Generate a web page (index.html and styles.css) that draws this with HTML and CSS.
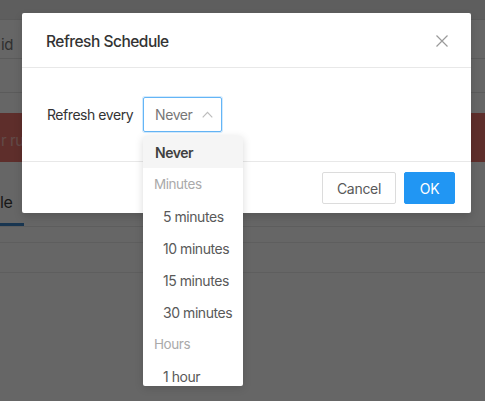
FILE: index.html
```html
<!DOCTYPE html>
<html>
<head>
<meta charset="utf-8">
<link rel="stylesheet" href="styles.css">
</head>
<body>
<div class="page">
  <div class="topbar"></div>
  <div class="row row1"><span class="frag frag-id">id</span></div>
  <div class="row row2"></div>
  <div class="spacer"></div>
  <div class="alert"><span class="frag frag-err">r ru</span></div>
  <div class="tabs"><div class="tab">le</div></div>
  <div class="line line1"></div>
  <div class="line line2"></div>
</div>
<div class="overlay"></div>
<div class="modal">
  <div class="modal-header">
    <div class="modal-title">Refresh Schedule</div>
    <svg class="close" width="12" height="12" viewBox="0 0 12 12"><path d="M0.5 0.5L11.5 11.5M11.5 0.5L0.5 11.5" stroke="#9a9a9a" stroke-width="1.2" fill="none"/></svg>
  </div>
  <div class="modal-body">
    <span class="label">Refresh every</span>
    <div class="select">
      <span class="select-value">Never</span>
      <svg class="chev" width="11" height="7" viewBox="0 0 11 7"><path d="M0.7 6.3L5.5 1.3L10.3 6.3" stroke="#bdbdbd" stroke-width="1.2" fill="none"/></svg>
    </div>
  </div>
  <div class="modal-footer">
    <button class="btn btn-cancel">Cancel</button>
    <button class="btn btn-ok">OK</button>
  </div>
</div>
<div class="dropdown">
  <div class="opt opt-selected">Never</div>
  <div class="group">Minutes</div>
  <div class="opt sub">5 minutes</div>
  <div class="opt sub">10 minutes</div>
  <div class="opt sub">15 minutes</div>
  <div class="opt sub">30 minutes</div>
  <div class="group">Hours</div>
  <div class="opt sub last">1 hour</div>
</div>
</body>
</html>
```
FILE: styles.css
```css
* { box-sizing: border-box; }
html, body { margin: 0; padding: 0; }
body {
  width: 485px;
  height: 401px;
  overflow: hidden;
  background: #fff;
  font-family: Inter, "Noto Sans", sans-serif;
  letter-spacing: -0.45px;
  position: relative;
}
.page { width: 485px; }
.topbar { height: 20px; background: #ececec; border-bottom: 1px solid #e2e2e2; }
.row { border-bottom: 1px solid #e4e4e4; display: flex; align-items: center; white-space: nowrap; }
.row1 { height: 39px; padding-top: 10px; }
.row2 { height: 34px; }
.frag { font-size: 15px; }
.frag-id { color: #777; margin-left: 1px; }
.spacer { height: 20px; }
.alert {
  height: 49px;
  background: #ea746c;
  display: flex;
  align-items: center;
  white-space: nowrap;
}
.frag-err { color: rgba(255,255,255,0.5); margin-left: 1px; padding-top: 6px; }
.tabs {
  height: 65px;
  border-bottom: 1px solid #e8e8e8;
  display: flex;
  white-space: nowrap;
}
.tab {
  width: 24px;
  padding-top: 30px;
  font-size: 16px;
  color: #3d3d3d;
  border-bottom: 3px solid #3d85c8;
}
.line { border-bottom: 1px solid #ebebeb; }
.line1 { height: 16px; }
.line2 { height: 30px; }

.overlay { position: absolute; inset: 0; background: rgba(0,0,0,0.6); }

.modal {
  position: absolute;
  left: 22px;
  top: 13px;
  width: 449px;
  background: #fff;
  border-radius: 2px;
  box-shadow: 0 4px 8px rgba(0,0,0,0.15);
}
.modal-header {
  height: 55px;
  padding: 0 23px 0 24px;
  border-bottom: 1px solid #e8e8e8;
  display: flex;
  align-items: center;
  justify-content: space-between;
}
.modal-title { font-size: 15.5px; font-weight: 500; color: #333; padding-top: 2px; letter-spacing: -0.5px; }
.close { margin-top: 2px; }
.modal-body {
  padding: 29px 24px 29px 25px;
  border-bottom: 1px solid #e8e8e8;
  display: flex;
  align-items: center;
  gap: 10px;
}
.label { font-size: 14px; color: #333; }
.select {
  width: 79px;
  height: 35px;
  border: 1px solid #64b5f6;
  border-radius: 2px;
  box-shadow: 0 0 0 1px rgba(33,150,243,0.2);
  display: flex;
  align-items: center;
  padding-left: 11px;
  gap: 10px;
}
.select-value { font-size: 14px; color: #777; }
.chev { margin-top: -1px; }
.modal-footer {
  padding: 10px 16px 9px;
  display: flex;
  justify-content: flex-end;
  gap: 8px;
}
.btn {
  height: 32px;
  font-family: inherit;
  font-size: 14px;
  letter-spacing: -0.3px;
  border-radius: 2px;
  padding: 0;
}
.btn-cancel { width: 74px; background: #fff; color: #595959; border: 1px solid #dcdcdc; }
.btn-ok { width: 51px; background: #2196f3; color: #fff; border: 1px solid #2196f3; }

.dropdown {
  position: absolute;
  left: 143px;
  top: 136px;
  width: 100px;
  height: 250px;
  overflow: hidden;
  background: #fff;
  border-radius: 2px;
  box-shadow: 0 2px 8px rgba(0,0,0,0.15);
}
.opt, .group {
  height: 32px;
  display: flex;
  align-items: center;
  font-size: 14px;
  white-space: nowrap;
}
.opt { color: #595959; padding-left: 12px; }
.opt.sub { padding-left: 20px; }
.opt.last { height: 26px; align-items: flex-start; padding-top: 8px; }
.opt-selected { background: #f5f5f5; font-weight: 600; color: #404040; }
.group { color: #aaa; padding-left: 11px; font-size: 13.5px; }
```
